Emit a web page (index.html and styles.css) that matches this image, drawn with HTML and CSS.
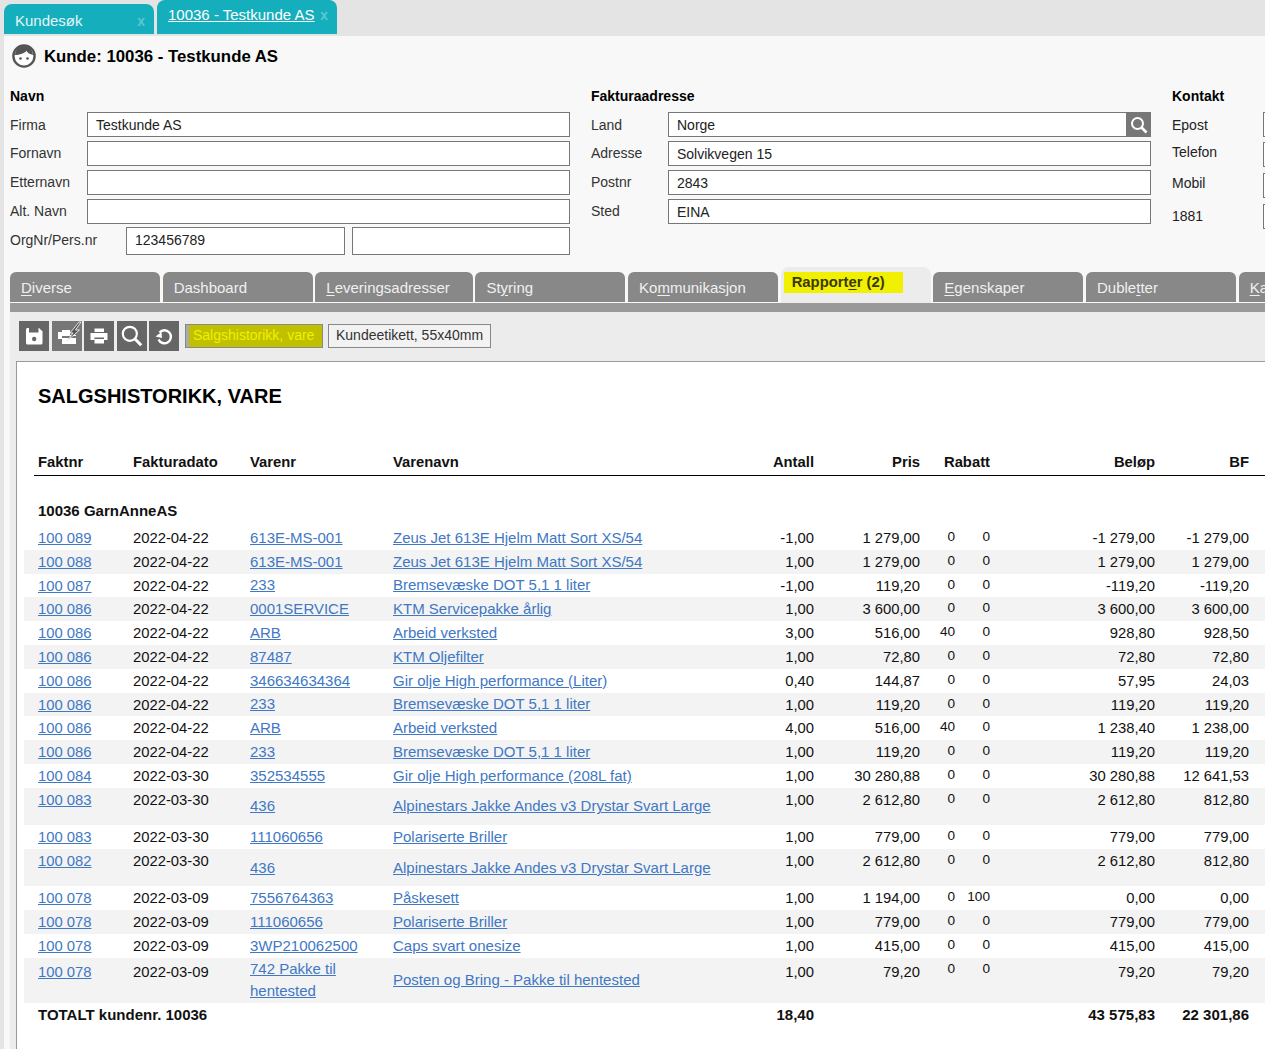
FILE: index.html
```html
<!DOCTYPE html>
<html lang="no">
<head>
<meta charset="utf-8">
<title>Kunde: 10036 - Testkunde AS</title>
<link rel="stylesheet" href="styles.css">
</head>
<body>
<nav class="doc-tabs">
  <a class="doc-tab doc-tab-low"><span>Kundesøk</span><i class="doc-x">x</i></a>
  <a class="doc-tab doc-tab-active"><span class="u">10036 - Testkunde AS</span><i class="doc-x">x</i></a>
</nav>
<main class="main">
  <header class="title">
    <svg class="face" viewBox="0 0 24 24" width="24" height="24"><circle cx="12" cy="12" r="10.6" fill="#fff" stroke="#555" stroke-width="2.4"/><path d="M3 11C3.500 5 7.500 1.500 12 1.500S20.500 5 21 11C18 10.500 15.500 8.800 14.500 6.800 12.500 9.500 7.500 11 3 11Z" fill="#555"/><circle cx="8.500" cy="14.500" r="1.300" fill="#555"/><circle cx="15.500" cy="14.500" r="1.300" fill="#555"/></svg>
    <h1>Kunde: 10036 - Testkunde AS</h1>
  </header>
  <section class="form">
    <div class="col col-a">
      <h2>Navn</h2>
      <div class="frow"><label>Firma</label><div class="field">Testkunde AS</div></div>
      <div class="frow"><label>Fornavn</label><div class="field"></div></div>
      <div class="frow"><label>Etternavn</label><div class="field"></div></div>
      <div class="frow"><label>Alt. Navn</label><div class="field"></div></div>
      <div class="frow frow-org"><label>OrgNr/Pers.nr</label><div class="field">123456789</div><div class="field"></div></div>
    </div>
    <div class="col col-b">
      <h2>Fakturaadresse</h2>
      <div class="frow"><label>Land</label><div class="field field-search">Norge<span class="search"><svg viewBox="0 0 20 20" width="20" height="20"><circle cx="8.500" cy="8.500" r="5.500" fill="none" stroke="#fff" stroke-width="2"/><path d="M12.500 12.500L17.500 17.500" stroke="#fff" stroke-width="2.600"/></svg></span></div></div>
      <div class="frow"><label>Adresse</label><div class="field">Solvikvegen 15</div></div>
      <div class="frow"><label>Postnr</label><div class="field">2843</div></div>
      <div class="frow"><label>Sted</label><div class="field">EINA</div></div>
    </div>
    <div class="col col-c">
      <h2>Kontakt</h2>
      <div class="frow frow-c"><label class="lift">Epost</label><div class="field"></div></div>
      <div class="frow frow-c"><label class="lift">Telefon</label><div class="field"></div></div>
      <div class="frow frow-c frow-c2"><label class="lift">Mobil</label><div class="field"></div></div>
      <div class="frow frow-c frow-c3"><label>1881</label><div class="field"></div></div>
    </div>
  </section>

  <nav class="sec-tabs">
    <a class="sec-tab"><span><u>D</u>iverse</span></a>
    <a class="sec-tab"><span>Dashboard</span></a>
    <a class="sec-tab"><span><u>L</u>everingsadresser</span></a>
    <a class="sec-tab"><span>St<u>y</u>ring</span></a>
    <a class="sec-tab"><span>Ko<u>m</u>munikasjon</span></a>
    <a class="sec-tab sec-tab-active"><span class="mark">Rapport<u>e</u>r (2)</span></a>
    <a class="sec-tab"><span><u>E</u>genskaper</span></a>
    <a class="sec-tab"><span>Duble<u>t</u>ter</span></a>
    <a class="sec-tab"><span><u>K</u>a</span></a>
  </nav>
  <div class="sec-bar"></div>

  <section class="panel">
    <div class="toolbar">
      <button class="tool"><svg viewBox="0 0 24 24" width="24" height="24"><path d="M4 5.500C4 4.700 4.700 4 5.500 4H17L20.500 7.500V19C20.500 19.800 19.800 20.500 19 20.500H5.500C4.700 20.500 4 19.800 4 19Z" fill="#fff"/><rect x="7" y="4" width="9.500" height="4.500" fill="#666"/><circle cx="12.200" cy="15" r="2.200" fill="#666"/></svg></button>
      <button class="tool tool-light"><svg viewBox="0 0 30 30" width="30" height="30"><path d="M6 11H10V9H18V14H24V23H10V18H6Z" fill="#fff"/><rect x="10" y="15" width="14" height="2" fill="#777"/><path d="M27 1L18 12H21L15 20 27.500 9H23.500L29 1Z" fill="#555" stroke="#eee" stroke-width=".9"/></svg></button>
      <button class="tool"><svg viewBox="0 0 24 24" width="24" height="24"><rect x="7.500" y="4.500" width="9.500" height="3.500" fill="#fff"/><path d="M3.500 9H20.500V16H17V13.500H7.500V16H3.500Z" fill="#fff"/><rect x="7.500" y="15" width="9.500" height="4.500" fill="#fff"/></svg></button>
      <button class="tool"><svg viewBox="0 0 24 24" width="26" height="26"><circle cx="10" cy="10" r="6.500" fill="none" stroke="#fff" stroke-width="2"/><path d="M14.800 14.800L20.500 20.500" stroke="#fff" stroke-width="2.800"/></svg></button>
      <button class="tool tool-last"><svg viewBox="0 0 24 24" width="24" height="24"><path d="M7.500 8.500A6.500 6.500 0 1 1 6.500 15.500" fill="none" stroke="#fff" stroke-width="2.400"/><path d="M3.500 12.500L9.500 8 10 14Z" fill="#fff"/></svg></button>
      <button class="rep rep-mark"><span>Salgshistorikk, vare</span></button>
      <button class="rep">Kundeetikett, 55x40mm</button>
    </div>

    <article class="paper">
      <h3>SALGSHISTORIKK, VARE</h3>
      <div class="row head">
        <b>Faktnr</b><b>Fakturadato</b><b>Varenr</b><b>Varenavn</b><b class="r">Antall</b><b class="r">Pris</b><b class="r">Rabatt</b><b class="r">Beløp</b><b class="r">BF</b>
      </div>
      <div class="group">10036 GarnAnneAS</div>

      <div class="row"><a href="#">100 089</a><span>2022-04-22</span><a class="m" href="#">613E-MS-001</a><a class="m" href="#">Zeus Jet 613E Hjelm Matt Sort XS/54</a><span class="r">-1,00</span><span class="r">1 279,00</span><span class="r s">0</span><span class="r s">0</span><span class="r">-1 279,00</span><span class="r">-1 279,00</span></div>
      <div class="row alt"><a href="#">100 088</a><span>2022-04-22</span><a class="m" href="#">613E-MS-001</a><a class="m" href="#">Zeus Jet 613E Hjelm Matt Sort XS/54</a><span class="r">1,00</span><span class="r">1 279,00</span><span class="r s">0</span><span class="r s">0</span><span class="r">1 279,00</span><span class="r">1 279,00</span></div>
      <div class="row"><a href="#">100 087</a><span>2022-04-22</span><a class="m" href="#">233</a><a class="m" href="#">Bremsevæske DOT 5,1 1 liter</a><span class="r">-1,00</span><span class="r">119,20</span><span class="r s">0</span><span class="r s">0</span><span class="r">-119,20</span><span class="r">-119,20</span></div>
      <div class="row alt"><a href="#">100 086</a><span>2022-04-22</span><a class="m" href="#">0001SERVICE</a><a class="m" href="#">KTM Servicepakke årlig</a><span class="r">1,00</span><span class="r">3 600,00</span><span class="r s">0</span><span class="r s">0</span><span class="r">3 600,00</span><span class="r">3 600,00</span></div>
      <div class="row"><a href="#">100 086</a><span>2022-04-22</span><a class="m" href="#">ARB</a><a class="m" href="#">Arbeid verksted</a><span class="r">3,00</span><span class="r">516,00</span><span class="r s">40</span><span class="r s">0</span><span class="r">928,80</span><span class="r">928,50</span></div>
      <div class="row alt"><a href="#">100 086</a><span>2022-04-22</span><a class="m" href="#">87487</a><a class="m" href="#">KTM Oljefilter</a><span class="r">1,00</span><span class="r">72,80</span><span class="r s">0</span><span class="r s">0</span><span class="r">72,80</span><span class="r">72,80</span></div>
      <div class="row"><a href="#">100 086</a><span>2022-04-22</span><a class="m" href="#">346634634364</a><a class="m" href="#">Gir olje High performance (Liter)</a><span class="r">0,40</span><span class="r">144,87</span><span class="r s">0</span><span class="r s">0</span><span class="r">57,95</span><span class="r">24,03</span></div>
      <div class="row alt"><a href="#">100 086</a><span>2022-04-22</span><a class="m" href="#">233</a><a class="m" href="#">Bremsevæske DOT 5,1 1 liter</a><span class="r">1,00</span><span class="r">119,20</span><span class="r s">0</span><span class="r s">0</span><span class="r">119,20</span><span class="r">119,20</span></div>
      <div class="row"><a href="#">100 086</a><span>2022-04-22</span><a class="m" href="#">ARB</a><a class="m" href="#">Arbeid verksted</a><span class="r">4,00</span><span class="r">516,00</span><span class="r s">40</span><span class="r s">0</span><span class="r">1 238,40</span><span class="r">1 238,00</span></div>
      <div class="row alt"><a href="#">100 086</a><span>2022-04-22</span><a class="m" href="#">233</a><a class="m" href="#">Bremsevæske DOT 5,1 1 liter</a><span class="r">1,00</span><span class="r">119,20</span><span class="r s">0</span><span class="r s">0</span><span class="r">119,20</span><span class="r">119,20</span></div>
      <div class="row"><a href="#">100 084</a><span>2022-03-30</span><a class="m" href="#">352534555</a><a class="m" href="#">Gir olje High performance (208L fat)</a><span class="r">1,00</span><span class="r">30 280,88</span><span class="r s">0</span><span class="r s">0</span><span class="r">30 280,88</span><span class="r">12 641,53</span></div>
      <div class="row alt tall"><a href="#">100 083</a><span>2022-03-30</span><a class="m" href="#">436</a><a class="m" href="#">Alpinestars Jakke Andes v3 Drystar Svart Large</a><span class="r">1,00</span><span class="r">2 612,80</span><span class="r s">0</span><span class="r s">0</span><span class="r">2 612,80</span><span class="r">812,80</span></div>
      <div class="row"><a href="#">100 083</a><span>2022-03-30</span><a class="m" href="#">111060656</a><a class="m" href="#">Polariserte Briller</a><span class="r">1,00</span><span class="r">779,00</span><span class="r s">0</span><span class="r s">0</span><span class="r">779,00</span><span class="r">779,00</span></div>
      <div class="row alt tall"><a href="#">100 082</a><span>2022-03-30</span><a class="m" href="#">436</a><a class="m" href="#">Alpinestars Jakke Andes v3 Drystar Svart Large</a><span class="r">1,00</span><span class="r">2 612,80</span><span class="r s">0</span><span class="r s">0</span><span class="r">2 612,80</span><span class="r">812,80</span></div>
      <div class="row"><a href="#">100 078</a><span>2022-03-09</span><a class="m" href="#">7556764363</a><a class="m" href="#">Påskesett</a><span class="r">1,00</span><span class="r">1 194,00</span><span class="r s">0</span><span class="r s">100</span><span class="r">0,00</span><span class="r">0,00</span></div>
      <div class="row alt"><a href="#">100 078</a><span>2022-03-09</span><a class="m" href="#">111060656</a><a class="m" href="#">Polariserte Briller</a><span class="r">1,00</span><span class="r">779,00</span><span class="r s">0</span><span class="r s">0</span><span class="r">779,00</span><span class="r">779,00</span></div>
      <div class="row"><a href="#">100 078</a><span>2022-03-09</span><a class="m" href="#">3WP210062500</a><a class="m" href="#">Caps svart onesize</a><span class="r">1,00</span><span class="r">415,00</span><span class="r s">0</span><span class="r s">0</span><span class="r">415,00</span><span class="r">415,00</span></div>
      <div class="row alt taller"><a href="#">100 078</a><span>2022-03-09</span><a class="m" href="#">742 Pakke til hentested</a><a class="m" href="#">Posten og Bring - Pakke til hentested</a><span class="r">1,00</span><span class="r">79,20</span><span class="r s">0</span><span class="r s">0</span><span class="r">79,20</span><span class="r">79,20</span></div>
      <div class="row total"><b class="span4">TOTALT kundenr. 10036</b><b class="r">18,40</b><span></span><span></span><span></span><b class="r">43 575,83</b><b class="r">22 301,86</b></div>
    </article>
  </section>
</main>
</body>
</html>
```
FILE: styles.css
```css
* { box-sizing: border-box; }
html, body { margin: 0; height: 1049px; overflow: hidden; }
body { background: #e4e4e4; font: 14.8px/22px "Liberation Sans", Arial, sans-serif; color: #111; }
a { color: #3f78c4; }
u { text-underline-offset: 2px; }

.doc-tabs { display: flex; height: 36px; padding-left: 4px; gap: 3px; }
.doc-tab { display: flex; justify-content: space-between; background: #15aebc; color: #e4f5f7; border-radius: 8px 8px 0 0; height: 34px; font-size: 15px; }
.doc-tab-low { width: 150px; margin-top: 4px; height: 30px; padding: 6px 9px 0 11px; }
.doc-tab-active { width: 180px; padding: 4px 9px 0 11px; color: #fff; }
.doc-tab .u { text-decoration: underline; }
.doc-x { font-style: normal; font-size: 14px; color: #5cc8d2; font-weight: bold; }

.main { margin-left: 4px; height: 1013px; background: #f8f8f8; overflow: hidden; }

.title { display: flex; align-items: center; gap: 8px; height: 40px; padding: 0 0 0 8px; }
.title h1 { margin: 0; padding-top: 1px; font-size: 16.8px; font-weight: bold; color: #000; }
.face { flex: none; }

.form { display: flex; padding: 9px 0 0 6px; height: 191px; font-size: 14px; }
.col { flex: none; }
.col h2 { margin: 0 0 5px; font-size: 14px; line-height: 22px; font-weight: bold; color: #000; height: 22px; }
.col-a { width: 560px; margin-right: 21px; }
.col-b { width: 560px; margin-right: 21px; }
.col-c { width: 300px; }
.frow { display: grid; grid-template-columns: 77px 1fr; height: 25px; margin-bottom: 4px; align-items: center; }
.frow label { color: #333; white-space: nowrap; padding-bottom: 2px; }
.frow:nth-of-type(1) label { padding-bottom: 0; }
.frow-org { grid-template-columns: 109px 219px 218px; column-gap: 7px; height: 28px; margin-top: -1px; }
.frow-org .field { height: 28px; }
.field { position: relative; height: 25px; border: 1px solid #777; background: #fff; padding: 0 8px; line-height: 24px; color: #222; }
.search { position: absolute; right: -1px; top: -1px; width: 25px; height: 25px; background: #777; display: flex; align-items: center; justify-content: center; }
.frow-c { grid-template-columns: 91px 100px; }
.frow-c label { color: #222; }
.frow-c2 { margin-top: 6px; }
.frow-c3 { margin-top: 7px; }
.frow .lift { padding-bottom: 4px; }

.sec-tabs { display: flex; gap: 2.67px; height: 36px; margin-left: 6px; align-items: flex-end; white-space: nowrap; }
.sec-tab { flex: none; min-width: 150px; height: 30px; margin-bottom: 1px; background: #888; color: #f0f0f0; border-radius: 6px 6px 0 0; padding: 5px 23px 0 11px; font-size: 15px; }
.sec-tab-active { height: 36px; margin-bottom: 0; background: #ececec; color: #3a3a00; font-weight: bold; padding-top: 4px; border-radius: 8px 8px 0 0; font-size: 14.8px; }
.mark { display: inline-block; background: #f0f000; margin-left: -8px; padding: 0 18px 0 8px; height: 21px; line-height: 20px; }
.sec-bar { height: 9px; background: #999; margin-left: 6px; }

.panel { margin-left: 6px; background: #ececec; padding: 9px 0 0 6px; height: 740px; }
.toolbar { display: flex; align-items: center; height: 30px; margin-left: 3px; }
.tool { flex: none; width: 30px; height: 30px; margin-right: 2.500px; border: 0; padding: 0; background: #666; display: flex; align-items: center; justify-content: center; }
.tool-light { background: #777; }
.tool-last { margin-right: 6px; }
.rep { flex: none; height: 24px; margin-right: 5px; padding: 0 7px 2px; background: #f2f2f2; border: 1px solid #888; font: 14px "Liberation Sans", Arial, sans-serif; color: #333; }
.rep-mark { background: #aaa; color: #f0f000; padding: 0; width: 138px; display: flex; justify-content: flex-end; }
.rep-mark span { display: block; width: 133px; height: 22px; line-height: 20px; background: #c0c000; text-align: left; padding-left: 4px; }

.paper { width: 1300px; margin-top: 10px; height: 720px; background: #fff; border: 1px solid #999; border-right: 0; padding: 0 0 0 7px; }
.paper h3 { margin: 0; padding: 19px 0 0 14px; height: 79px; font-size: 20px; line-height: 30px; font-weight: bold; color: #000; }
.row { display: grid; grid-template-columns: 95px 117px 143px 367px 54px 106px 35px 35px 165px 94px; width: 1241px; height: 23.8px; padding-left: 14px; align-items: start; }
.row > * { line-height: 22px; padding-top: 1px; }
.row > .m { align-self: center; padding-top: 0; font-size: 15px; }
.alt { background: #f3f3f3; }
.tall { height: 37.3px; }
.taller { height: 45.6px; }
.taller > * { padding-top: 3px; }
.taller > .m { padding-right: 30px; }
.r { text-align: right; }
.s { font-size: 13.6px; padding-top: 0 !important; }
.span4 { grid-column: span 4; }
.head { height: 35px; width: 1300px; border-bottom: 1px solid #000; margin-left: 10px; padding-left: 4px; grid-template-columns: 95px 117px 143px 367px 54px 106px 70px 165px 94px; }
.head > * { padding-top: 10px; }
.group { height: 50px; padding: 24px 0 0 14px; font-weight: bold; font-size: 15px; }
.total { font-size: 15px; }
.total > * { padding-top: 1px; }
.total b { color: #111; }
```
